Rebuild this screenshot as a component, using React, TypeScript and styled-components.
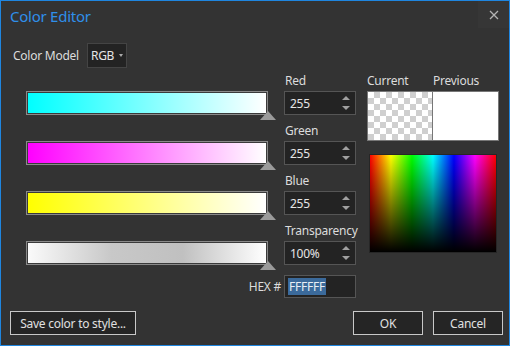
import React from "react";
import styled, { createGlobalStyle } from "styled-components";

const Global = createGlobalStyle`
  html, body { margin: 0; padding: 0; background: #333; }
  body { font-family: "Noto Sans", "Open Sans", sans-serif; }
  * { box-sizing: border-box; }
`;

const Window = styled.div`
  width: 510px;
  height: 346px;
  background: #333333;
  border: 1px solid #1f86e0;
  display: flex;
  flex-direction: column;
  color: #dcdcdc;
  font-size: 12px;
  letter-spacing: -0.25px;
  overflow: hidden;
`;

const TitleBar = styled.div`
  height: 28px;
  display: flex;
  align-items: center;
  justify-content: space-between;
  padding-left: 9px;
`;

const Title = styled.div`
  color: #2f8fea;
  font-size: 15px;
  line-height: 20px;
  margin-top: 1px;
`;

const CloseBtn = styled.div`
  width: 31px;
  height: 27px;
  align-self: flex-start;
  background: #363636;
  display: flex;
  align-items: center;
  justify-content: center;
`;

const Body = styled.div`
  flex: 1;
  display: flex;
  flex-direction: column;
  padding-top: 14px;
`;

const ModelRow = styled.div`
  display: flex;
  align-items: center;
  gap: 8px;
  height: 25px;
  padding-left: 12px;
`;

const Label = styled.span`
  color: #dcdcdc;
  line-height: 16px;
`;

const Dropdown = styled.div`
  width: 40px;
  height: 25px;
  background: #232323;
  border: 1px solid #444;
  display: flex;
  align-items: center;
  gap: 5px;
  padding-left: 3px;
  color: #e6e6e6;
`;

const Caret = styled.span`
  width: 0;
  height: 0;
  border-left: 2.5px solid transparent;
  border-right: 2.5px solid transparent;
  border-top: 3px solid #aaa;
`;

const Main = styled.div`
  display: grid;
  grid-template-columns: 258px 83px 132px;
  margin-top: 5px;
  margin-left: 25px;
`;

const Column = styled.div<{ $gap?: number }>`
  display: flex;
  flex-direction: column;
  gap: ${(p) => p.$gap ?? 8}px;
`;

const Group = styled.div`
  display: flex;
  flex-direction: column;
  height: 42px;
`;

const GroupLabel = styled.div`
  height: 18px;
  line-height: 16px;
  padding-left: 1px;
  color: #dcdcdc;
  white-space: nowrap;
`;

const BarSlot = styled.div`
  position: relative;
  width: 242px;
  height: 24px;
  margin-top: 18px;
`;

const Bar = styled.div<{ $bg: string }>`
  height: 24px;
  border: 1px solid #8a8a8a;
  padding: 1px;
  background: #3a3a3a;
  &::after {
    content: "";
    display: block;
    height: 100%;
    background: ${(p) => p.$bg};
  }
`;

const Thumb = styled.div`
  position: absolute;
  right: -8px;
  bottom: -5px;
  width: 0;
  height: 0;
  border-left: 8px solid transparent;
  border-right: 8px solid transparent;
  border-bottom: 9px solid #9a9a9a;
`;

const Field = styled.div`
  height: 24px;
  width: 72px;
  background: #232323;
  border: 1px solid #555;
  display: flex;
  align-items: center;
  justify-content: space-between;
  padding: 0 5px 0 5px;
  color: #e6e6e6;
`;

const Spinner = styled.div`
  display: flex;
  flex-direction: column;
  gap: 6px;
  align-items: center;
`;

const Arrow = styled.span<{ $down?: boolean }>`
  width: 0;
  height: 0;
  border-left: 4px solid transparent;
  border-right: 4px solid transparent;
  ${(p) =>
    p.$down
      ? "border-top: 4px solid #a0a0a0;"
      : "border-bottom: 4px solid #a0a0a0;"}
`;

const PreviewLabels = styled.div`
  display: grid;
  grid-template-columns: 66px 66px;
  height: 18px;
  line-height: 16px;
`;

const Swatches = styled.div`
  display: grid;
  grid-template-columns: 64px 1fr;
  width: 132px;
  height: 50px;
  border: 1px solid #777;
  background: #777;
  gap: 1px;
`;

const Checker = styled.div`
  background: repeating-conic-gradient(#cfcfcf 0% 25%, #ffffff 0% 50%) 0 0 / 12px 12px;
`;

const White = styled.div`
  background: #ffffff;
`;

const Spectrum = styled.div`
  margin-top: 13px;
  margin-left: 2px;
  width: 128px;
  height: 99px;
  border: 1px solid #262626;
  background: linear-gradient(to bottom, rgba(0, 0, 0, 0) 0%, #000 100%),
    linear-gradient(
      to right,
      #ff0000 0%,
      #ffff00 16.6%,
      #00ff00 33.3%,
      #00ffff 50%,
      #0000ff 66.6%,
      #ff00ff 83.3%,
      #ff0000 100%
    );
`;

const HexRow = styled.div`
  display: flex;
  justify-content: flex-end;
  align-items: center;
  gap: 3px;
  margin-top: 10px;
  width: 355px;
`;

const HexField = styled(Field)`
  height: 23px;
  justify-content: flex-start;
  padding-left: 3px;
`;

const Selected = styled.span`
  background: #3b6a9b;
  color: #e8eef5;
  padding: 0 1px;
  line-height: 17px;
`;

const Footer = styled.div`
  display: flex;
  align-items: center;
  margin-top: 13px;
  padding: 0 6px 0 9px;
  gap: 10px;
`;

const Button = styled.div<{ $w: number }>`
  width: ${(p) => p.$w}px;
  height: 24px;
  border: 1px solid #c8c8c8;
  background: #252525;
  color: #e0e0e0;
  display: flex;
  align-items: center;
  justify-content: center;
`;

const Spacer = styled.div`
  flex: 1;
`;

const bars = [
  "linear-gradient(to right, #00ffff, #ffffff)",
  "linear-gradient(to right, #ff00ff, #ffffff)",
  "linear-gradient(to right, #ffff00, #ffffff)",
  "linear-gradient(to right, #fafafa 0%, #c8c8c8 35%, #c0c0c0 65%, #ffffff 100%)",
];

const fields = [
  { label: "Red", value: "255" },
  { label: "Green", value: "255" },
  { label: "Blue", value: "255" },
  { label: "Transparency", value: "100%" },
];

export default function App() {
  return (
    <>
      <Global />
      <Window>
        <TitleBar>
          <Title>Color Editor</Title>
          <CloseBtn>
            <svg width="10" height="10" viewBox="0 0 10 10">
              <path d="M1 1 L9 9 M9 1 L1 9" stroke="#b4b4b4" strokeWidth="1.3" />
            </svg>
          </CloseBtn>
        </TitleBar>
        <Body>
          <ModelRow>
            <Label>Color Model</Label>
            <Dropdown>
              RGB <Caret />
            </Dropdown>
          </ModelRow>
          <Main>
            <Column>
              {bars.map((b, i) => (
                <BarSlot key={i}>
                  <Bar $bg={b} />
                  <Thumb />
                </BarSlot>
              ))}
            </Column>
            <Column>
              {fields.map((f) => (
                <Group key={f.label}>
                  <GroupLabel>{f.label}</GroupLabel>
                  <Field>
                    <span>{f.value}</span>
                    <Spinner>
                      <Arrow />
                      <Arrow $down />
                    </Spinner>
                  </Field>
                </Group>
              ))}
            </Column>
            <Column $gap={0}>
              <PreviewLabels>
                <span>Current</span>
                <span>Previous</span>
              </PreviewLabels>
              <Swatches>
                <Checker />
                <White />
              </Swatches>
              <Spectrum />
            </Column>
          </Main>
          <HexRow>
            <Label>HEX #</Label>
            <HexField>
              <Selected>FFFFFF</Selected>
            </HexField>
          </HexRow>
          <Footer>
            <Button $w={126}>Save color to style...</Button>
            <Spacer />
            <Button $w={70}>OK</Button>
            <Button $w={70}>Cancel</Button>
          </Footer>
        </Body>
      </Window>
    </>
  );
}
